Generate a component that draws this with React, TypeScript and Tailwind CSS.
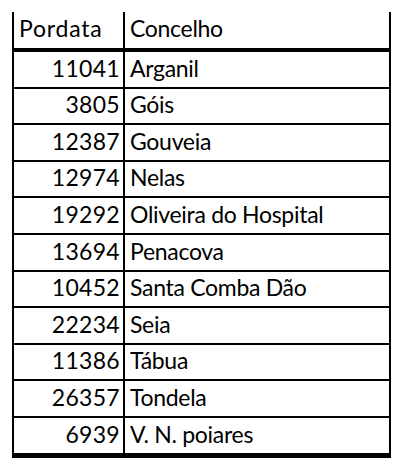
import React from 'react';

type Row = { pordata: number; concelho: string };

const rows: Row[] = [
  { pordata: 11041, concelho: 'Arganil' },
  { pordata: 3805, concelho: 'Góis' },
  { pordata: 12387, concelho: 'Gouveia' },
  { pordata: 12974, concelho: 'Nelas' },
  { pordata: 19292, concelho: 'Oliveira do Hospital' },
  { pordata: 13694, concelho: 'Penacova' },
  { pordata: 10452, concelho: 'Santa Comba Dão' },
  { pordata: 22234, concelho: 'Seia' },
  { pordata: 11386, concelho: 'Tábua' },
  { pordata: 26357, concelho: 'Tondela' },
  { pordata: 6939, concelho: 'V. N. poiares' },
];

const App: React.FC = () => {
  return (
    <div className="w-[409px] h-[472px] bg-white pt-[12px] pl-[12px] font-['Lato',sans-serif] text-[23px] tracking-[-0.3px] leading-none text-black">
      <div className="w-[379px] border-x-2 border-b-[5px] border-black">
        {/* Header */}
        <div className="flex h-[40px] border-b-4 border-black">
          <div className="w-[111px] border-r-2 border-black flex items-end pl-[5px] pb-[8px] tracking-[0.8px]">
            Pordata
          </div>
          <div className="flex-1 flex items-end pl-[5px] pb-[8px]">Concelho</div>
        </div>

        {rows.map((row, i) => (
          <div
            key={row.concelho}
            className={
              i < rows.length - 1
                ? 'flex h-[36.6px] border-b-2 border-black'
                : 'flex h-[34.6px]'
            }
          >
            <div className="w-[111px] border-r-2 border-black flex items-end justify-end pr-[3px] pb-[7px] tracking-[0.3px]">
              {row.pordata}
            </div>
            <div className="flex-1 flex items-end pl-[5px] pb-[7px]">{row.concelho}</div>
          </div>
        ))}
      </div>
    </div>
  );
};

export default App;
